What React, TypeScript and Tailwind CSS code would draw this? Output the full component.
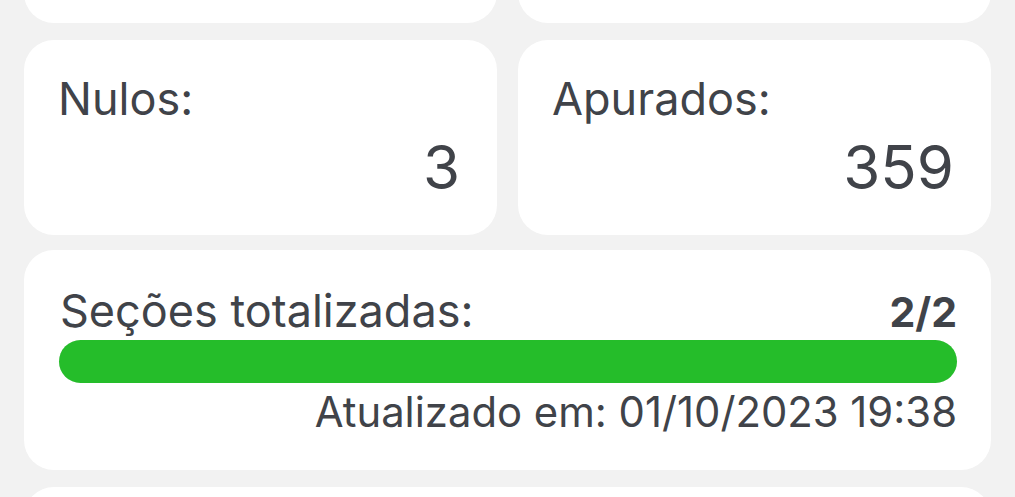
export default function App() {
  return (
    <div
      className="h-[497px] w-full overflow-hidden bg-[#f2f2f2] px-6 text-[#404349]"
      style={{ fontFamily: "Inter, 'Noto Sans', sans-serif" }}
    >
      {/* Cards cut off by the top edge */}
      <div className="-mt-[172px] grid grid-cols-2 gap-x-[21px]">
        <div className="h-[195px] rounded-[30px] bg-white" />
        <div className="h-[195px] rounded-[30px] bg-white" />
      </div>

      {/* Stat cards */}
      <div className="mt-[17px] grid grid-cols-2 gap-x-[21px]">
        <StatCard label="Nulos:" value="3" />
        <StatCard label="Apurados:" value="359" />
      </div>

      {/* Progress card */}
      <div className="mt-[15px] h-[220px] rounded-[30px] bg-white pt-[38px] pr-[34px] pl-[35px]">
        <div className="flex items-baseline justify-between">
          <span className="text-[45px] leading-none pl-[1px]">Seções totalizadas:</span>
          <span className="text-[41px] font-bold leading-none">2/2</span>
        </div>
        <div className="mt-[7px] h-[43px] w-full rounded-full bg-[#e5e5e5]">
          <div className="h-full rounded-full bg-[#25bd2a]" style={{ width: "100%" }} />
        </div>
        <div className="mt-[9px] text-right text-[41.8px] leading-none">
          Atualizado em: 01/10/2023 19:38
        </div>
      </div>

      <div className="mt-[17px] h-[195px] rounded-[30px] bg-white" />
    </div>
  );
}

function StatCard({ label, value }: { label: string; value: string }) {
  return (
    <div className="flex h-[195px] flex-col rounded-[30px] bg-white pt-[36px] pr-[37px] pl-[34px]">
      <span className="text-[45px] leading-none">{label}</span>
      <span className="mt-4 text-right text-[60px] leading-none">{value}</span>
    </div>
  );
}
